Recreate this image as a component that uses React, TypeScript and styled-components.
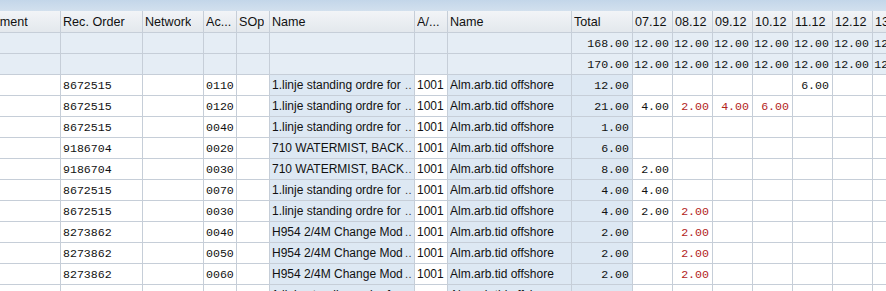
import React from "react";
import styled, { createGlobalStyle } from "styled-components";

const Global = createGlobalStyle`
  html, body { margin: 0; padding: 0; background: #ffffff; overflow: hidden; }
  body { font-family: "Liberation Sans", Arial, sans-serif; }
`;

const COLS = "101px 82px 61px 33px 33px 145px 33px 124px 61px repeat(7, 40px)";

const Page = styled.div`
  width: 886px;
  height: 291px;
  overflow: hidden;
  background: #ffffff;
`;

const TopBar = styled.div`
  height: 11px;
  background: linear-gradient(#c3d6e9, #d2e0ee);
`;

const Grid = styled.div`
  margin-left: -40px;
  display: flex;
  flex-direction: column;
`;

const Row = styled.div<{ $head?: boolean }>`
  display: grid;
  grid-template-columns: ${COLS};
  height: ${(p) => (p.$head ? 22 : 21)}px;
`;

type Tone = "white" | "sum" | "blue" | "head";

const bg: Record<Tone, string> = {
  white: "#ffffff",
  sum: "#e5edf5",
  blue: "#dde8f3",
  head: "linear-gradient(#f2f4f7, #e3e8ed)",
};

const Cell = styled.div<{ $tone: Tone; $right?: boolean; $mono?: boolean; $red?: boolean }>`
  box-sizing: border-box;
  border-right: 1px solid #c6ced8;
  border-bottom: 1px solid #c6ced8;
  background: ${(p) => bg[p.$tone]};
  padding: 0 ${(p) => (p.$right ? 3 : 2)}px 0 2px;
  display: flex;
  align-items: center;
  justify-content: ${(p) => (p.$right ? "flex-end" : "flex-start")};
  font-family: ${(p) =>
    p.$mono ? '"Liberation Mono", "Courier New", monospace' : '"Liberation Sans", Arial, sans-serif'};
  font-size: ${(p) => (p.$mono ? "11.6px" : p.$tone === "head" ? "12.6px" : "12px")};
  color: ${(p) => (p.$red ? "#b3241c" : "#111111")};
  white-space: nowrap;
  overflow: hidden;
  min-width: 0;
`;

const NameCell = styled(Cell)`
  justify-content: space-between;
  align-items: baseline;
  padding-top: 3px;
  padding-right: 2px;
`;

const Clip = styled.span`
  overflow: hidden;
  white-space: nowrap;
  min-width: 0;
`;

const Dots = styled.span`
  flex: none;
  font-size: 11px;
  letter-spacing: 0.5px;
  color: #333333;
`;

const headers = [
  "Assignment", "Rec. Order", "Network", "Ac...", "SOp", "Name", "A/...", "Name", "Total",
  "07.12", "08.12", "09.12", "10.12", "11.12", "12.12", "13.12",
];

type V = string | [string, boolean];

interface DataRow {
  order: string;
  act: string;
  name: string;
  ax: string;
  name2: string;
  total: string;
  days: V[];
}

const L1 = "1.linje standing ordre for";
const W = "710 WATERMIST, BACK";
const H = "H954 2/4M Change Mod";
const ALM = "Alm.arb.tid offshore";

const rows: DataRow[] = [
  { order: "8672515", act: "0110", name: L1, ax: "1001", name2: ALM, total: "12.00", days: ["", "", "", "", "6.00", "", ""] },
  { order: "8672515", act: "0120", name: L1, ax: "1001", name2: ALM, total: "21.00", days: ["4.00", ["2.00", true], ["4.00", true], ["6.00", true], "", "", ""] },
  { order: "8672515", act: "0040", name: L1, ax: "1001", name2: ALM, total: "1.00", days: [] },
  { order: "9186704", act: "0020", name: W, ax: "1001", name2: ALM, total: "6.00", days: [] },
  { order: "9186704", act: "0030", name: W, ax: "1001", name2: ALM, total: "8.00", days: ["2.00"] },
  { order: "8672515", act: "0070", name: L1, ax: "1001", name2: ALM, total: "4.00", days: ["4.00"] },
  { order: "8672515", act: "0030", name: L1, ax: "1001", name2: ALM, total: "4.00", days: ["2.00", ["2.00", true]] },
  { order: "8273862", act: "0040", name: H, ax: "1001", name2: ALM, total: "2.00", days: ["", ["2.00", true]] },
  { order: "8273862", act: "0050", name: H, ax: "1001", name2: ALM, total: "2.00", days: ["", ["2.00", true]] },
  { order: "8273862", act: "0060", name: H, ax: "1001", name2: ALM, total: "2.00", days: ["", ["2.00", true]] },
  { order: "", act: "", name: L1, ax: "", name2: ALM, total: "", days: [] },
];

const DAYS = 7;

function SumRow({ total }: { total: string }) {
  return (
    <Row>
      {Array.from({ length: 8 }).map((_, i) => (
        <Cell key={i} $tone="sum" />
      ))}
      <Cell $tone="sum" $right $mono>{total}</Cell>
      {Array.from({ length: DAYS }).map((_, i) => (
        <Cell key={"d" + i} $tone="sum" $right $mono>12.00</Cell>
      ))}
    </Row>
  );
}

export default function App() {
  return (
    <Page>
      <Global />
      <TopBar />
      <Grid>
        <Row $head>
          {headers.map((h, i) => (
            <Cell key={i} $tone="head">
              <Clip>{h}</Clip>
            </Cell>
          ))}
        </Row>
        <SumRow total="168.00" />
        <SumRow total="170.00" />
        {rows.map((r, idx) => (
          <Row key={idx}>
            <Cell $tone="white" />
            <Cell $tone="white" $mono>{r.order}</Cell>
            <Cell $tone="white" />
            <Cell $tone="white" $mono>{r.act}</Cell>
            <Cell $tone="white" />
            <NameCell $tone="blue">
              <Clip>{r.name}</Clip>
              <Dots>..</Dots>
            </NameCell>
            <Cell $tone="white">{r.ax}</Cell>
            <Cell $tone="blue"><Clip>{r.name2}</Clip></Cell>
            <Cell $tone="blue" $right $mono>{r.total}</Cell>
            {Array.from({ length: DAYS }).map((_, i) => {
              const v = r.days[i];
              const text = Array.isArray(v) ? v[0] : v || "";
              const red = Array.isArray(v) ? v[1] : false;
              return (
                <Cell key={i} $tone="white" $right $mono $red={red}>
                  {text}
                </Cell>
              );
            })}
          </Row>
        ))}
      </Grid>
    </Page>
  );
}
